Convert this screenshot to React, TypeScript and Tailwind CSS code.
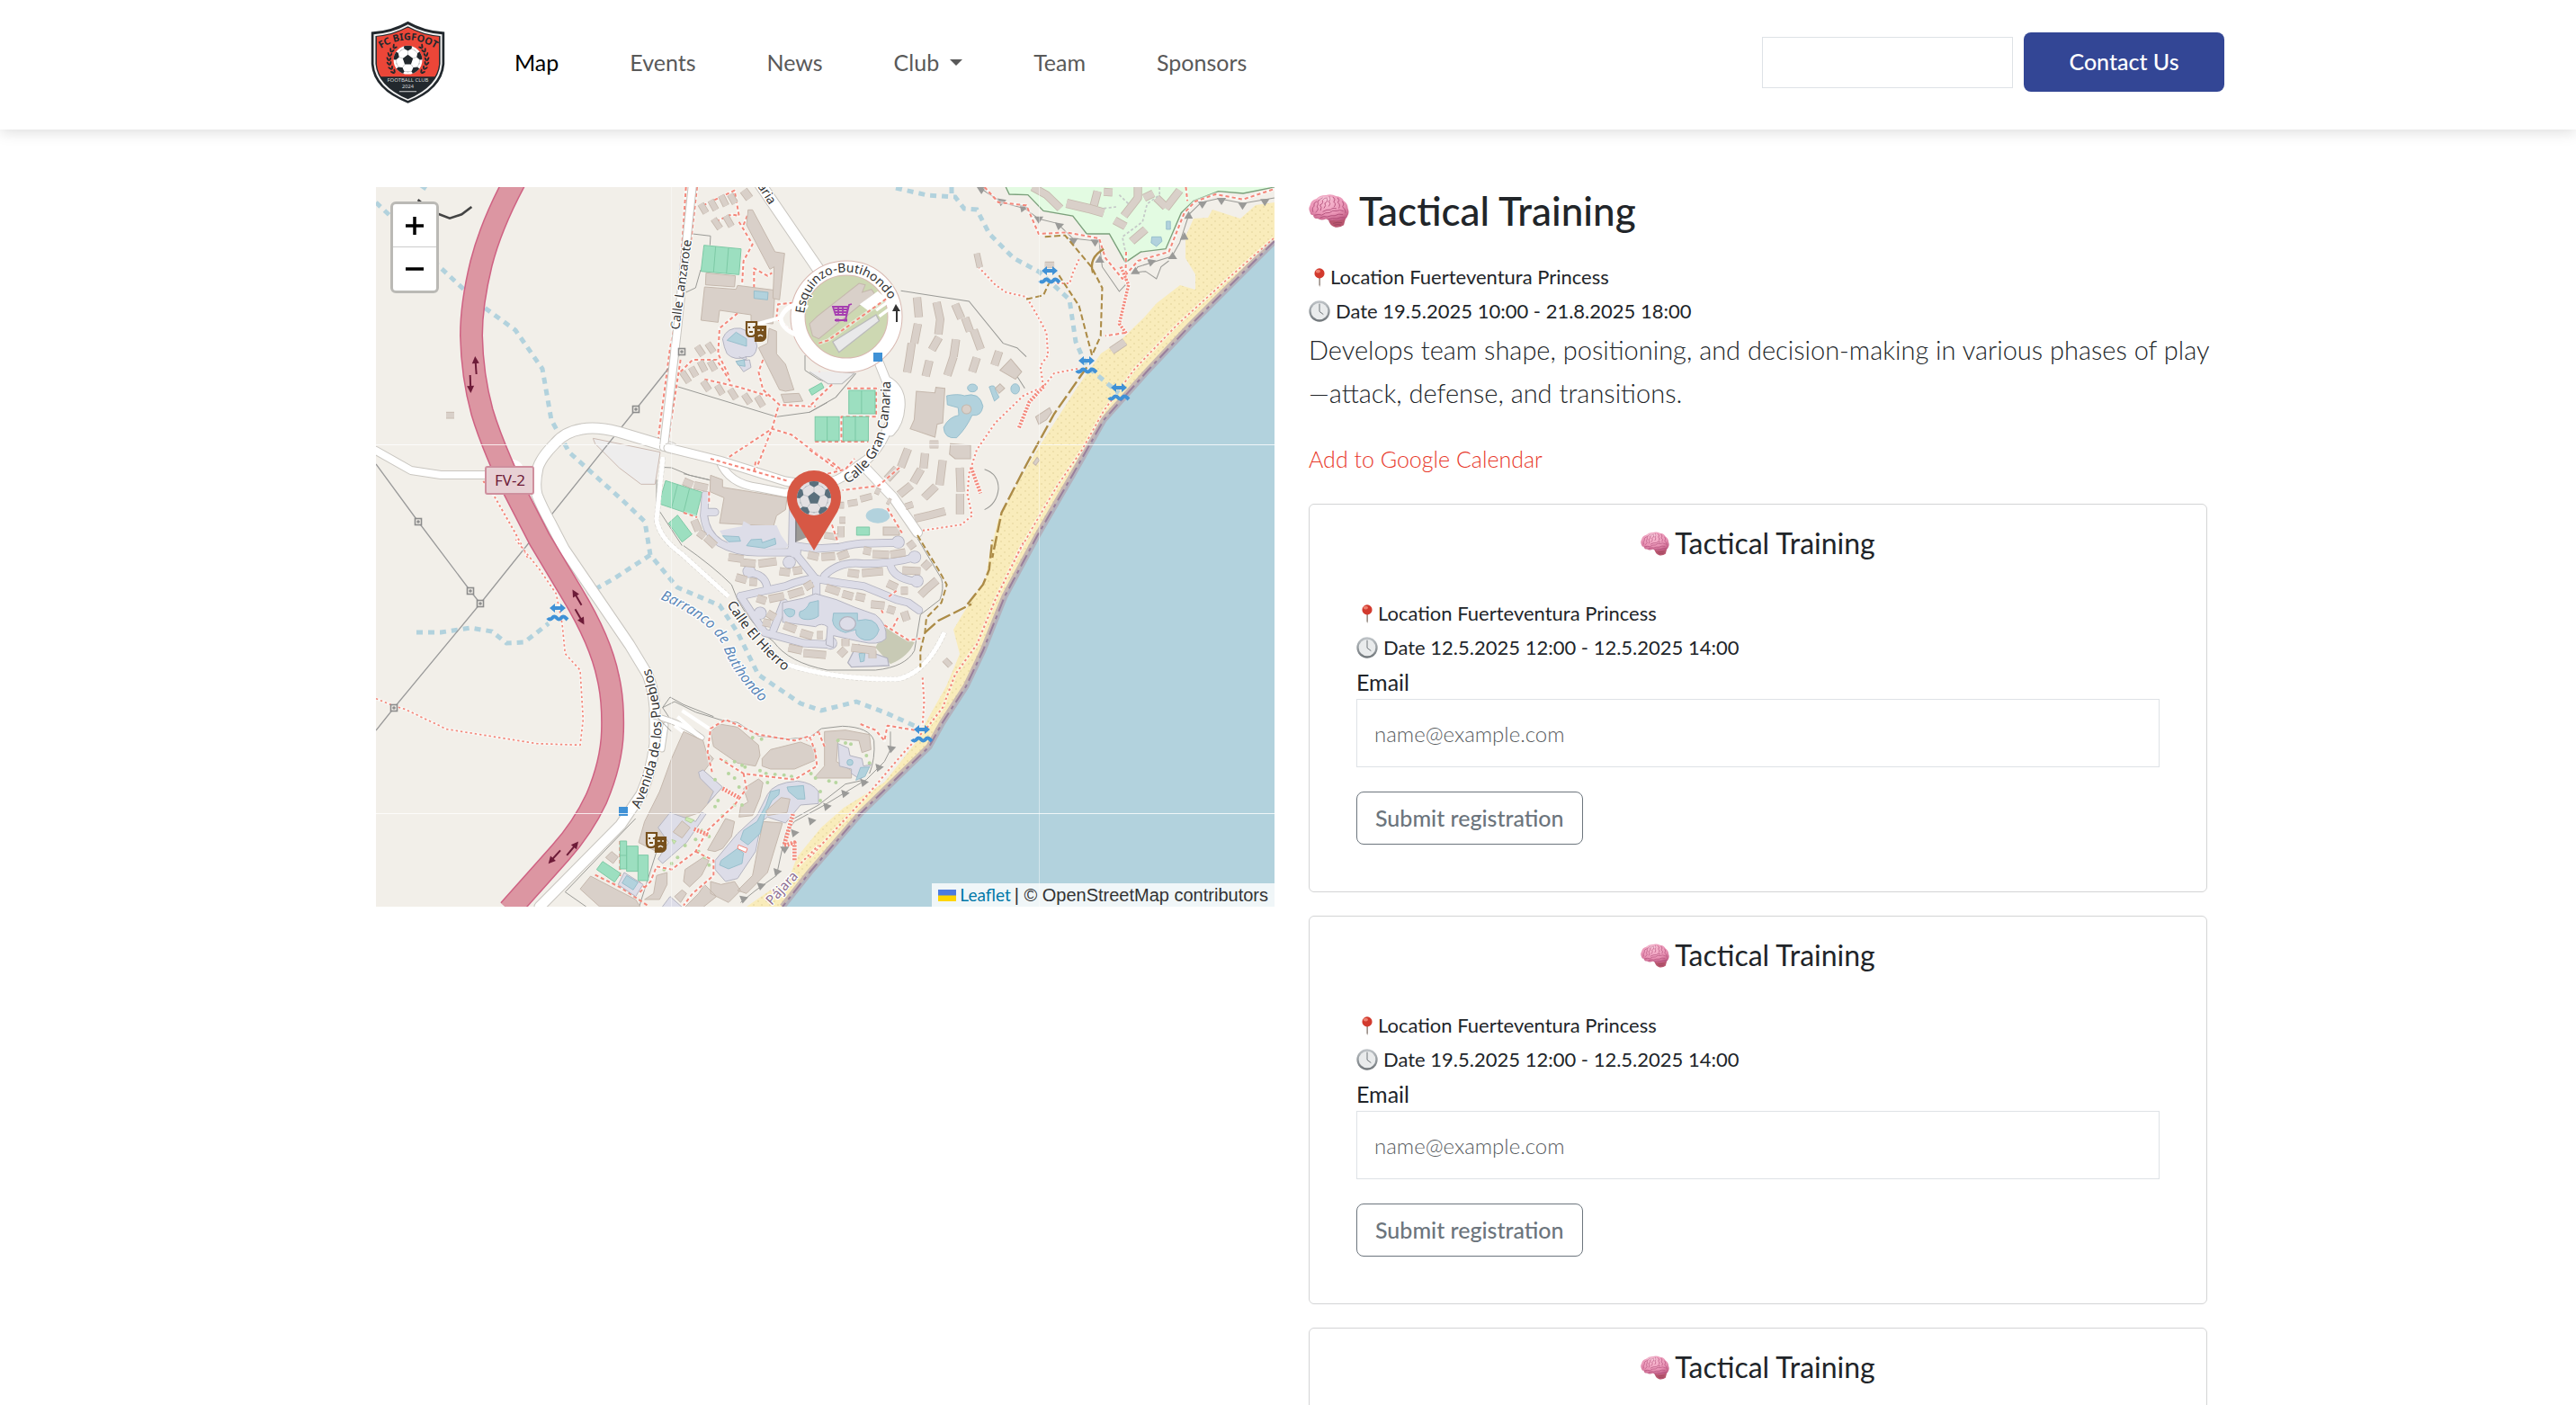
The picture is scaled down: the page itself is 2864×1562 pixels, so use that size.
import { useId } from "react";

const FONT = "font-['Lato','Open_Sans',sans-serif]";

/* ---------- small pictograms ---------- */

function Brain({ className }: { className: string }) {
  const id = useId();
  return (
    <svg viewBox="0 0 136 112" className={className} aria-hidden="true">
      <defs>
        <radialGradient id={id} cx="0.45" cy="0.3" r="0.75">
          <stop offset="0" stopColor="#f9bcd2" />
          <stop offset="0.6" stopColor="#e993b5" />
          <stop offset="1" stopColor="#bf5a82" />
        </radialGradient>
      </defs>
      <path d="M66 84 Q70 106 90 111 Q106 113 118 104 L124 82 L88 80 Z" fill="#b9566f" />
      <path
        d="M5 62 Q-3 48 5 36 Q8 20 26 15 Q38 2 58 3 Q76 -2 92 6 Q110 7 118 22 Q132 32 132 48 Q138 62 130 74 Q126 86 110 86 Q96 92 84 87 Q70 90 58 83 Q42 90 30 82 Q16 82 15 70 Q6 70 5 62 Z"
        fill={`url(#${id})`}
      />
      <g fill="none" stroke="#ac4a75" strokeWidth="2.8" strokeLinecap="round" opacity="0.9">
        <path d="M14 58 Q10 46 18 40 Q14 30 26 24" />
        <path d="M24 60 Q36 52 28 42 Q34 32 30 24 Q38 16 46 12" />
        <path d="M40 54 Q46 44 38 36 Q50 32 46 20 Q54 10 62 12" />
        <path d="M52 46 Q60 38 54 30 Q64 28 62 16 M70 8 Q76 18 68 24 Q76 32 68 40" />
        <path d="M20 70 Q34 66 44 70 Q56 60 70 62 Q80 52 94 56 Q104 50 116 56" />
        <path d="M40 78 Q52 72 62 76 Q76 70 88 72 Q100 64 114 68 M66 84 Q80 78 94 82 Q106 76 120 78" />
        <path d="M82 10 Q92 16 84 26 Q94 30 86 42 M98 12 Q106 20 98 28 Q108 34 102 46 M114 24 Q122 34 114 42 Q124 50 124 62" />
        <path d="M48 58 Q60 50 74 52 Q80 44 92 48" />
      </g>
      <path d="M82 98 Q96 92 112 96 M86 104 Q98 100 108 103" fill="none" stroke="#8d3d56" strokeWidth="2" />
      <ellipse cx="56" cy="14" rx="26" ry="7" fill="#fff" opacity="0.25" />
    </svg>
  );
}

function Pin() {
  return (
    <svg viewBox="0 0 72 64" className="h-[21px] w-[24px] shrink-0" aria-hidden="true">
      <path d="M34 26h5v30l-2.500 8l-2.500-8z" fill="#9c9089" />
      <circle cx="36" cy="18" r="17" fill="#d23a2e" />
      <ellipse cx="31" cy="11" rx="8" ry="6" fill="#f4917f" opacity="0.8" />
    </svg>
  );
}

function Clock() {
  const id = useId();
  return (
    <svg viewBox="0 0 72 72" className="h-[24px] w-[24px] shrink-0" aria-hidden="true">
      <defs>
        <linearGradient id={id} x1="0" y1="0" x2="0" y2="1">
          <stop offset="0" stopColor="#c0c5c9" />
          <stop offset="1" stopColor="#6f7579" />
        </linearGradient>
      </defs>
      <circle cx="36" cy="36" r="35" fill={`url(#${id})`} />
      <circle cx="36" cy="36" r="28" fill="#e9ebec" />
      <path d="M36 12V37L48 46" fill="none" stroke="#70767a" strokeWidth="3" strokeLinecap="round" />
    </svg>
  );
}

function Ball({ dark, light }: { dark: string; light: string }) {
  const id = useId();
  return (
    <g>
      <clipPath id={id}>
        <circle r="56" />
      </clipPath>
      <circle r="56" fill={light} />
      <g clipPath={`url(#${id})`}>
        <path d="M0-21L20-6L12 17H-12L-20-6Z" fill={dark} />
        {[0, 72, 144, 216, 288].map((a) => (
          <g key={a} transform={`rotate(${a})`}>
            <path d="M-18-60L-14-44L0-36L14-44L18-60Z" fill={dark} />
            <path d="M0-36V-20" stroke={dark} strokeWidth="2" opacity="0.35" />
            <path d="M14-44L30-36" stroke={dark} strokeWidth="2" opacity="0.35" />
            <path d="M-14-44L-30-36" stroke={dark} strokeWidth="2" opacity="0.35" />
          </g>
        ))}
      </g>
    </g>
  );
}

function Laurel() {
  return (
    <g fill="#22282d">
      {[
        [116, 110, 40], [106, 122, 25], [99, 136, 12], [96, 151, 0], [97, 166, -12], [102, 181, -25], [110, 194, -38],
      ].map(([x, y, r]) => (
        <g key={y} transform={`translate(${x} ${y}) rotate(${r})`}>
          <ellipse cx="-4" cy="0" rx="3" ry="8" transform="rotate(-30)" />
          <ellipse cx="5" cy="0" rx="3" ry="7" transform="rotate(25)" />
        </g>
      ))}
    </g>
  );
}

function ClubLogo() {
  return (
    <svg viewBox="36 24 248 278" className="h-[92px] w-[83px]" role="img" aria-label="FC Bigfoot">
      <defs>
        <path id="crest-arc" d="M66 120 Q160 58 256 120" />
        <clipPath id="crest-clip">
          <path d="M160 47 Q210 74 265 78 V168 Q258 240 160 284 Q62 240 55 168 V78 Q110 74 160 47Z" />
        </clipPath>
      </defs>
      <path d="M160 26 Q215 58 283 62 V170 Q276 256 160 301 Q44 256 37 170 V62 Q105 58 160 26Z" fill="#22282d" />
      <path d="M160 37 Q213 66 275 70 V169 Q268 250 160 293 Q52 250 45 169 V70 Q107 66 160 37Z" fill="#f3f3f3" />
      <path d="M160 43 Q211 71 269 75 V169 Q262 244 160 288 Q58 244 51 169 V75 Q109 71 160 43Z" fill="#22282d" />
      <g clipPath="url(#crest-clip)">
        <rect x="40" y="30" width="240" height="182" fill="#ec4638" />
      </g>
      <Laurel />
      <g transform="translate(320 0) scale(-1 1)">
        <Laurel />
      </g>
      <g transform="translate(160 156) scale(.86)">
        <Ball dark="#22282d" light="#fff" />
      </g>
      <text fontSize="33" fontWeight="700" fill="#22282d" textAnchor="middle" className="font-['Noto_Sans',sans-serif]">
        <textPath href="#crest-arc" startOffset="50%">FC BIGFOOT</textPath>
      </text>
      <text x="160" y="230" fontSize="18" fill="#d9dadb" textAnchor="middle" className="font-['Noto_Sans',sans-serif]">FOOTBALL CLUB</text>
      <text x="160" y="252" fontSize="17" fill="#d9dadb" textAnchor="middle" className="font-['Noto_Sans',sans-serif]">2024</text>
      <path d="M131 262H189" stroke="#d9dadb" strokeWidth="3" />
    </svg>
  );
}

/* ---------- map ---------- */

const NW = "translate(-18 -8) scale(.33333)";
const NE = "matrix(.3444 0 0 .33333 482 -8)";
const SW = "translate(-18 392) scale(.33333)";
const SE = "matrix(.3444 0 0 .33333 482 392)";
const RESORT = "translate(342 302) scale(.33333)";
const SOUTH = "translate(292 572) scale(.33333)";

const C = {
  land: "#f2efe9", sea: "#b2d2dd", sand: "#f9ecbb", building: "#d9d0c9", edge: "#c5b8ad",
  paved: "#dddde8", pavedEdge: "#b4b4c0", water: "#b2d2dd", waterEdge: "#8fb9c8", pitch: "#9cdfc0",
  pitchEdge: "#7cc9a5", foot: "#f4877a", track: "#ac8b46", ink: "#333", minor: "#9a9a96",
};

type Shape = { d: string };

function Strip({ d, w, fill = C.building, edge = C.edge, cap = "butt" }: Shape & { w: number; fill?: string; edge?: string; cap?: "butt" | "round" | "square" }) {
  return (
    <g fill="none" strokeLinejoin="round" strokeLinecap={cap}>
      <path d={d} stroke={edge} strokeWidth={w + 5} />
      <path d={d} stroke={fill} strokeWidth={w} />
    </g>
  );
}
const Building = ({ d }: Shape) => <path d={d} fill={C.building} stroke={C.edge} strokeWidth="3" />;
const Paved = ({ d }: Shape) => <path d={d} fill={C.paved} stroke={C.pavedEdge} strokeWidth="3" />;
const Pool = ({ d }: Shape) => <path d={d} fill={C.water} stroke={C.waterEdge} strokeWidth="2.5" />;
const Pitch = ({ d }: Shape) => <path d={d} fill={C.pitch} stroke={C.pitchEdge} strokeWidth="3" />;
const Foot = ({ d, w = 6, dash = "12 9" }: Shape & { w?: number; dash?: string }) => (
  <g fill="none" strokeLinejoin="round">
    <path d={d} stroke="#fff" strokeWidth={w + 5} opacity="0.5" />
    <path d={d} stroke={C.foot} strokeWidth={w} strokeDasharray={dash} />
  </g>
);
const Thin = ({ d }: Shape) => <path d={d} fill="none" stroke={C.minor} strokeWidth="3" />;
const Track = ({ d }: Shape) => <path d={d} fill="none" stroke={C.track} strokeWidth="6" strokeDasharray="20 10" />;
const Stream = ({ d }: Shape) => <path d={d} fill="none" stroke={C.sea} strokeWidth="5" strokeDasharray="7 6" />;
const Road = ({ d, w }: Shape & { w: number }) => (
  <g fill="none" strokeLinejoin="round" strokeLinecap="round">
    <path d={d} stroke="#c9c6c0" strokeWidth={w + 2} />
    <path d={d} stroke="#fff" strokeWidth={w} />
  </g>
);

function Teeth({ at }: { at: [number, number, number][] }) {
  return (
    <g fill="#9a9a98">
      {at.map(([x, y, r]) => (
        <path key={`${x}-${y}`} d="M-15-6H15L0 18Z" transform={`translate(${x} ${y}) rotate(${r})`} />
      ))}
    </g>
  );
}

function Shrubs({ at }: { at: [number, number][] }) {
  return (
    <g fill="#b7d6a0">
      {at.map(([x, y]) => (
        <circle key={`${x}-${y}`} cx={x} cy={y} r="6" />
      ))}
    </g>
  );
}

const COAST = "999,60 904,155 858,204 809,259 775,319 735,388 699,455 675,515 656,555 630,595 615,622 539,696 482,762 452,800";
const TRUNK =
  "M155 -8Q128 42 117 85Q106 130 106 165Q107 210 118 250Q127 280 146 322L182 392L218 452Q250 505 258 545Q264 570 263 605Q262 640 245 680Q230 712 205 740L148 804";

const FORDS: [number, number][] = [[749, 99], [790, 199], [826, 229], [202, 474], [607, 609]];
const PYLONS: [number, number][] = [[340, 183], [289, 247], [47, 372], [105, 449], [116, 463], [20, 579]];
const LABELS: { id: string; d: string; text: string; size: number; fill: string; italic?: boolean }[] = [
  { id: "l1", d: "M337 159L352 50", text: "Calle Lanzarote", size: 14, fill: C.ink },
  { id: "l2", d: "M424 -1L442 27L462 60", text: "aria", size: 14, fill: C.ink },
  { id: "l3", d: "M476 141Q480 106 509 96Q545 88 569 122L575 132", text: "Esquinzo-Butihondo", size: 14, fill: C.ink },
  { id: "l4", d: "M524 330Q556 310 566 275Q573 250 572 200", text: "Calle Gran Canaria", size: 15, fill: C.ink },
  { id: "l5", d: "M390 464Q420 513 464 546", text: "Calle El Hierro", size: 15, fill: C.ink },
  { id: "l6", d: "M316 458Q368 480 385 508Q397 548 444 586", text: "Barranco de Butihondo", size: 16, fill: "#5b87b8", italic: true },
  { id: "l7", d: "M293 692Q314 645 317 610Q319 575 301 520", text: "Avenida de los Pueblos", size: 15, fill: C.ink },
  { id: "l8", d: "M440 799L476 760", text: "Pájara", size: 15, fill: "#8c6d90" },
];

function Masks({ x, y }: { x: number; y: number }) {
  return (
    <g transform={`translate(${x} ${y})`} fill="none" stroke="#77501c" strokeWidth="2.2">
      <path d="M-10-10H1V2Q-1 6-4 6H-7Q-10 5-10 1Z" fill="#f2efe9" />
      <path d="M-7-5V-3M-2-5V-3M-7 1H-3" />
      <path d="M0-5H11V7Q10 11 5 11H0Z" fill="#77501c" />
      <path d="M2-1H5M7-1H9M3 6Q5 3 8 6" stroke="#f2efe9" strokeWidth="1.6" />
    </g>
  );
}

function AreaMap() {
  return (
    <svg viewBox="0 0 999 800" preserveAspectRatio="xMidYMid slice" className="block h-full w-full" role="img" aria-label="Map of Butihondo">
      <defs>
        <pattern id="sand" width="9" height="8" patternUnits="userSpaceOnUse">
          <rect width="9" height="8" fill={C.sand} />
          <circle cx="2" cy="2" r="0.7" fill="#dccb90" />
          <circle cx="6" cy="6" r="0.7" fill="#dccb90" />
        </pattern>
        {LABELS.map((l) => (
          <path key={l.id} id={l.id} d={l.d} />
        ))}
      </defs>
      <rect width="999" height="800" fill={C.land} />
      <polygon points={`${COAST} 999,800`} fill={C.sea} />
      <polygon
        points={`${COAST} 412,800 438,782 459,769 468,745 495,712 520,690 565,662 599,619 613,592 634,555 649,519 642,492 654,472 678,435 682,409 692,369 716,325 737,289 778,225 806,185 826,172 854,145 868,129 894,109 911,114 911,97 900,79 900,55 909,35 925,34 930,25 961,35 978,20 999,17`}
        fill="url(#sand)"
      />
      <polyline points={COAST} fill="none" stroke="#b3a3ae" strokeWidth="7" opacity="0.7" />
      <polyline points={COAST} fill="none" stroke="#8a6a92" strokeWidth="2" strokeDasharray="14 5 4 5" opacity="0.7" />

      {/* golf course and north-east cliffs */}
      <g transform={NE}>
        <path d="M632 20L645 48L705 50L755 103L850 120L895 180L968 180L1020 275L1070 240L1150 230L1200 110L1240 70L1320 38L1400 45L1501 24V20Z" fill="#e3fbe2" stroke="#7ba07b" strokeWidth="4" />
        <Strip w={22} d="M720 24L765 50L810 95M930 38L918 85M1060 24L1060 60L1015 120M1195 35L1150 95M985 135L1020 155M950 40L978 42M1080 60L1110 45M1120 60L1150 90" />
        <Strip w={26} d="M830 78L900 95L950 110" />
        <Strip w={22} d="M1040 205L1085 165" />
        <Pool d="M1105 190H1135L1138 205L1120 222L1103 210ZM1152 138H1165V165H1152Z" />
        <path d="M1130 24V50L1090 80L1075 140L1010 190L1020 240M1000 50L1030 80M950 95L990 90" fill="none" stroke="#c5c8c8" strokeWidth="5" strokeDasharray="9 7" />
        <Thin d="M555 30L620 75L695 95L740 130L800 145L850 195L935 205L945 290L1000 372L1020 350M1501 60L1400 78L1320 62L1265 75L1225 115L1195 210L1170 255L1060 290L1045 310L1085 305L1120 330L1135 290L1160 270" />
        <Teeth at={[[555, 30, 0], [620, 70, 10], [690, 92, 20], [740, 128, 0], [806, 150, 10], [852, 200, 0], [922, 205, 0], [937, 270, 180], [1268, 78, 0], [1330, 66, 0], [1398, 82, 0], [1470, 70, 0], [1222, 120, -60], [1208, 190, -60], [1172, 258, 180], [1103, 272, 10], [1052, 308, 180]]} />
        <Foot d="M565 24L610 75L700 85L740 180L830 175L935 195L955 260L1010 330L1060 270L1160 240L1210 110L1245 72L1310 48L1400 65L1501 30M1215 24L1220 70M1022 240L1020 340" />
        <Foot w={10} dash="6 5" d="M1005 290L1030 350L1000 480L1025 515" />
        <Foot d="M1020 510L955 520" />
        <Foot d="M545 290L600 350L635 375L700 390L740 460L765 510L770 585L745 620L755 690L690 720L600 810L540 900L515 980L510 1050L525 1120L490 1150L360 1170M865 630L790 645L755 690M870 265L850 310L840 345L790 345" dash="6 9" />
        <Foot w={12} dash="6 5" d="M755 690L710 740L675 830M522 960L552 1045" />
        <Foot w={5} dash="7 9" d="M1498 195L1350 330L1190 480L1050 630L950 770L880 900L800 1020L720 1160L665 1262" />
        <Track d="M760 190L825 185L910 290L945 360L940 520L912 585L870 420L800 310M700 398L755 385L775 340" />
        <path d="M950 230Q900 260 915 310" fill="none" stroke={C.track} strokeWidth="7" />
        <path d="M895 625L790 780L700 950L620 1110L590 1260" fill="none" stroke={C.track} strokeWidth="7" strokeDasharray="46 12" />
        <Thin d="M295 370L515 405L625 545L670 560L700 590M565 965Q610 980 610 1030Q605 1080 565 1100M670 655L695 695" />
        <Strip w={22} d="M347 392L353 458M410 408L422 465L416 515M418 525L395 567M470 415L490 462M502 460L518 505M530 500L553 565M350 480L338 545M330 545L322 600L315 642M473 532L465 590M465 590L445 652M612 572L597 618M540 593L525 640M387 603L375 655M318 897L295 958M282 962L250 998M373 912L368 962M360 965L335 1010M328 1018L290 1050M430 935L420 1018M408 1022L370 1060M485 960L488 1040M486 1047L486 1115M340 1130L390 1118L438 1105M388 882L416 882" />
        <Strip w={16} d="M540 245L550 292M760 283H790" />
        <Strip w={22} d="M975 570L1018 540" />
        <Building d="M345 705L405 710L408 692L437 695L430 810L412 815L405 858L325 830L338 800Z" />
        <Building d="M615 635L650 597L685 640L665 665ZM455 880L520 885L520 930L470 930L452 915ZM730 790L775 760L782 775L765 800L740 815ZM722 945L735 925L742 935L730 952Z" />
        <Pool d="M443 720Q480 712 500 720Q550 705 560 755Q555 790 525 785Q505 830 475 860Q435 865 433 825Q450 790 482 785L480 760L445 750ZM510 694a16 13 0 1 0 32 0a16 13 0 1 0-32 0M650 697a14 17 0 1 0 28 0a14 17 0 1 0-28 0M580 690Q600 680 600 700L612 725L597 738Z" />
        <Building d="M492 765a15 15 0 1 0 30 0a15 15 0 1 0-30 0M600 695L615 680L630 695L612 712Z" />
      </g>

      {/* streams */}
      <Stream d="M0 17L19 35L69 87L99 115L122 135L155 159L185 202L195 259L215 295L275 349L299 372L305 409L335 445L382 465L402 495L425 542L472 574L495 582L534 572L568 585L599 599" />
      <Stream d="M305 409L265 435L235 452" />
      <Stream d="M45 495L72 495L105 490L129 494L145 507L165 506L192 485" />
      <Stream d="M578 1L613 9L644 11L654 24L668 25L682 52L709 79L737 94L771 125L778 172L790 199L826 229M640 0V11M50 -2L56 2" />

      {/* west: hotel blocks and gardens */}
      <g transform={NW}>
        <path d="M778 862L1002 908L985 1015H938L865 960L785 880Z" fill="#eeeded" stroke="#cbbab2" strokeWidth="3" />
        <Thin d="M1110 180L1170 187L1168 218M1137 300L1120 360L1088 375M1055 688L1390 790L1500 775L1560 742M1002 958L1040 960L1100 985L1165 1000M1485 585V635L1530 665L1560 675M990 1000V1090L1075 1220" />
        <Foot d="M1088 24L1060 440L1035 560L995 865M1125 24L1105 200M1070 600L1025 890L1200 930L1440 1005" />
        <Foot d="M1145 85L1250 35L1265 120L1240 115L1185 140M1265 140L1310 215L1280 270L1275 350M1315 360V295L1360 320L1375 310M1445 410L1395 415L1390 460L1450 515M1260 445L1200 495L1195 580L1230 650M1070 640L1110 600L1190 600L1240 680M1150 665L1260 690L1360 720M1330 640L1345 700L1400 750L1490 755L1520 755M1345 600L1330 640M1395 760L1375 830L1320 970M1215 935L1375 830L1440 850L1560 940M1300 100L1280 150" />
        <Foot dash="7 9" d="M412 1005L440 1040L520 1180L560 1260" />
        <Building d="M1150 357L1255 365L1260 352L1385 368L1378 480L1305 475L1305 450L1200 435L1195 475L1138 468Z" />
        <Building d="M1155 310L1253 320L1250 357L1153 350Z" />
        <Building d="M1295 100L1310 100L1385 240L1417 245L1400 400L1378 395L1382 290L1368 298L1290 150Z" />
        <Building d="M1365 495L1390 505V580L1420 615L1448 700L1420 705L1400 700L1330 560L1360 545ZM1405 715L1465 712L1478 738L1415 743Z" />
        <Strip w={18} d="M1137 80L1155 110M1170 68L1188 100M1205 52L1222 86M1235 48L1252 78M1180 130L1202 162M1220 120L1240 155M1125 555L1145 585M1160 545L1180 575M1075 640L1098 675M1105 625L1122 655M1135 605L1152 638M1168 605L1185 635M1145 672L1165 702M1192 685L1210 715M1235 698L1255 730M1282 715L1302 745M1325 722L1345 755" />
        <Strip w={24} d="M1280 35L1300 62" />
        <path d="M1287 588Q1300 610 1265 590M1210 530Q1225 490 1270 495Q1320 510 1325 555Q1320 595 1290 590Q1250 605 1225 580Q1215 560 1210 530ZM1255 605L1300 600L1305 625L1280 640Z" fill={C.paved} stroke={C.pavedEdge} strokeWidth="3" />
        <Pool d="M1225 535L1255 508L1290 530V555ZM1315 370L1362 375L1360 400L1315 395ZM1255 605L1282 600L1285 622L1262 618Z" />
        <Strip w={18} d="M288 785L315 785" />
        <Pitch d="M1148 218L1272 230L1265 316L1138 305ZM1187 222L1180 308M1230 226L1223 312M1020 1003L1142 1042L1122 1122L998 1080ZM1060 1016L1040 1094M1100 1028L1080 1108M1060 1118L1108 1182L1075 1208L1030 1145ZM1498 700L1540 677L1548 693L1508 718Z" />
        <path d="M194 66L210 80L240 105L300 128L340 115L373 90" fill="none" stroke="#444" strokeWidth="8" />
      </g>
      <g transform={NE}>
        <Foot d="M122 695H215V790H103V870M18 873H190M30 640L75 680L0 755M0 900L90 965" />
        <Pitch d="M127 702H212V780H127ZM168 702V780M18 790H96V870H18ZM57 790V870M108 790H190V870H108ZM148 790V870" />
        <path d="M0 640L60 680L105 680L145 645L100 640" fill="#eeeded" stroke="#bbb" strokeWidth="3" />
        <Thin d="M0 775L85 725L150 645" />
      </g>

      {/* power line */}
      <path d="M340 183L289 247L116 463L20 579L0 604M0 308L47 372L105 449L116 463" fill="none" stroke="#9a9a9a" strokeWidth="1.3" />

      {/* roads */}
      <Road w={8} d="M0 293L39 315L72 320L140 320" />
      <circle cx="152" cy="315" r="12" fill="#fff" />
      <Road w={8} d="M382 304Q392 330 425 334L455 340L475 335" />
      <Road w={11} d="M329 290L269 272Q245 266 229 269Q210 272 199 285Q184 300 180 312Q176 330 179 342Q184 355 195 375L209 402L282 509L302 542Q309 560 310 579V619Q306 650 295 675L272 709L182 800" />
      <Road w={8} d="M352 -4L335 159L320 289" />
      <Road w={9} d="M325 290L382 304L455 327Q500 335 519 322L547 302Q564 285 568 269Q577 255 575 239Q572 225 566 212L558 192M568 215Q585 225 583 245Q582 262 572 272" />
      <Road w={10} d="M542 310L575 345L602 384" />
      <Road w={12} d="M424 -8L495 96" />
      <Road w={5} d="M309 588Q340 595 362 612M322 598L318 625" />
      <path d="M319 300L312 370Q315 390 340 408L392 455M455 530Q510 548 580 547Q612 540 632 495" fill="none" stroke="#d5d2cc" strokeWidth="6" strokeDasharray="3 2" />
      <path d="M319 300L312 370Q315 390 340 408L392 455M455 530Q510 548 580 547Q612 540 632 495" fill="none" stroke="#fff" strokeWidth="5" />
      <circle cx="523" cy="144" r="54" fill="#cdd8b2" stroke="#d8b8b0" strokeWidth="17" />
      <circle cx="523" cy="144" r="54" fill="none" stroke="#fff" strokeWidth="15" />
      <path d="M480 134Q460 125 450 145Q450 160 478 168" fill="none" stroke="#fff" strokeWidth="5" />
      <path d="M450 145L425 152" stroke="#fff" strokeWidth="4" />
      <g transform={NE}>
        <Building d="M0 480L25 455L160 345L180 350L170 375L200 365L210 380L160 420L30 530L10 520Z" />
        <path d="M75 540L215 450L225 470L95 575Z" fill="#e9e9ea" stroke="#bbb" strokeWidth="4" />
        <path d="M170 415L220 378L240 395L190 430ZM215 435L250 410M225 455L258 430" fill="#fff" stroke="#fff" strokeWidth="10" />
        <Foot d="M30 545L60 535L250 395" />
      </g>

      {/* resort village */}
      <g transform={RESORT}>
        <Thin d="M0 290Q100 360 160 420L180 470Q230 560 300 610Q350 680 480 705L640 705Q740 695 770 640L790 520L855 470Q870 430 860 400L780 265M0 50L90 72" />
        <path d="M675 560Q720 600 770 612Q750 660 690 685L640 630Z" fill="#c8cab5" />
        <Building d="M90 55L130 70V95L345 130L340 170L310 190L300 225L120 215L135 130L88 110Z" />
        <g fill="none" strokeLinecap="round" strokeLinejoin="round">
          {[[C.pavedEdge, 5], [C.paved, 0]].map(([color, extra]) => (
            <g key={String(color)} stroke={String(color)}>
              <g strokeWidth={22 + Number(extra)}>
                <path d="M73 120L68 190Q75 250 120 280Q180 315 260 312L370 312M365 140L362 300M70 178H105M360 300L440 400M370 290L440 300L520 295Q580 280 620 282L715 280M440 400Q400 400 340 425L190 458M440 400Q520 415 600 425L710 470L750 480L785 505M470 390Q520 340 600 350Q700 350 765 330M690 355Q700 400 780 410M443 400V460M278 425Q270 385 218 380" />
                <path d="M190 458L270 580L400 615L490 620M300 570L335 480" />
              </g>
              <g strokeWidth={38 + Number(extra)}>
                <path d="M715 278h1M770 328h1M778 408h1M218 376h1M352 345h1M255 515h1M490 615h1M370 310h1" />
              </g>
            </g>
          ))}
        </g>
        <path d="M120 240L195 225L200 208L225 222L310 222L325 255L350 290L340 298L200 305L150 285Z" fill={C.paved} />
        <path d="M330 480L400 465L440 450L510 470L570 495L640 520Q680 550 675 600Q650 625 590 610L500 590L500 630L475 620L480 560Q460 545 440 560L330 545Z" fill={C.paved} stroke={C.pavedEdge} strokeWidth="3" />
        <Pool d="M130 257L185 260L190 275L150 277ZM210 290L225 270L260 268L262 280L305 265L308 285L270 298ZM335 505Q350 495 370 505Q375 525 355 528Q340 525 335 505ZM420 480L450 473L450 525Q430 540 400 535Q380 530 388 510Q410 505 420 480ZM500 515L580 515L580 540Q640 525 652 570Q640 610 605 605Q570 595 575 570L540 580Q500 570 497 540Z" />
        <ellipse cx="547" cy="550" rx="27" ry="23" fill={C.paved} stroke={C.pavedEdge} strokeWidth="4" />
        <path d="M568 640L585 620L610 640L680 665L685 690L560 695L548 680Z" fill={C.paved} stroke={C.pavedEdge} strokeWidth="4" />
        <Pool d="M585 650L605 648L602 675L590 678Z" />
        <path d="M608 190a40 25 0 1 0 80 0a40 25 0 1 0-80 0" fill={C.water} />
        <Pitch d="M577 228H620V255H577Z" />
        <rect x="666" y="228" width="54" height="27" fill={C.building} stroke={C.edge} strokeWidth="3" />
        <Strip w={22} d="M0 75L30 88M35 88L80 98M150 328L200 335M190 345L240 350M250 350L310 342M35 205L50 240M50 245L70 260M75 262L105 290M320 375L355 380M365 375L395 370M175 395L210 405M220 410L245 412M245 465L275 475M285 468L335 458M350 455L400 440M405 430L430 415M475 430L520 445M530 450L565 460M575 458L605 465M625 485L670 490M680 500L705 508M415 320L450 328M460 328L505 325M515 328L550 315M600 305L625 310M630 318L685 320M690 320L740 312M750 295L770 280M548 380L585 385M595 382L665 375M730 372L790 375M800 365L820 345M680 415L712 430M725 440L748 440M790 455L810 435L845 405M735 510L745 540M280 515L305 530M265 545L290 550M335 555L375 570M390 580L430 592M445 588L465 588M350 630L395 640M400 648L475 655M540 600V625M520 655L540 635M560 630L640 640M630 640V665" />
        <Strip w={18} d="M520 155H535M548 150L580 145M590 135L628 125M520 205H540M470 255L515 262M525 225V262M640 105L655 112M680 140L690 145M740 160L765 152" />
        <Foot d="M0 180L45 195M85 110V150M680 165L730 250M495 220L515 280M720 30L650 90L530 105M670 555L750 605L790 600M700 560L715 530M685 460L710 440M660 505L665 515" />
        <Foot d="M90 0L230 40L350 75M240 10L235 45M460 55L540 35L570 0M480 0L530 40" />
        <Track d="M780 255L850 370L878 420L860 480L810 530L805 580L790 640V695" />
        <path d="M805 580L850 540L960 485" fill="none" stroke={C.track} strokeWidth="7" strokeDasharray="46 12" />
      </g>
      <g transform={SE}>
        <path d="M510 215L560 150L580 100L590 0" fill="none" stroke={C.track} strokeWidth="7" strokeDasharray="46 12" />
        <Foot dash="7 9" d="M365 460L370 540L365 620M690 10L600 200L540 350L470 450L430 560L385 620L300 715L180 860L0 1060" />
        <Strip w={16} d="M436 400L455 420" />
      </g>

      {/* south: hotel complex */}
      <g transform={SOUTH}>
        <Thin d="M80 20L120 0L190 35L270 60L330 70L400 115L500 125L570 118L610 90L680 82Q770 85 785 130Q790 190 770 240M840 100V160L820 200L760 260L620 345L520 400L490 440L460 580L390 630L340 670M750 262L690 275L600 345L500 400M110 100L60 50M60 500L0 690" />
        <path d="M130 50L215 125M145 30L235 90M120 80L160 110" stroke="#fff" strokeWidth="12" fill="none" />
        <Building d="M150 100L215 130L225 165L250 190L205 250L275 290L205 370L115 400L60 500L0 470L20 400L70 300L110 190Z" />
        <Building d="M240 100L270 75L330 85L400 145L405 180L390 215L330 205L250 150Z" />
        <Building d="M412 190L440 160L540 135L590 155L590 195L520 225L440 225L412 215Z" />
        <Building d="M620 100L690 95L770 110L775 160L745 170L735 130L665 125L660 200L710 230L710 255L585 255L620 215Z" />
        <Building d="M350 290L400 258L415 270L405 320L380 380L335 385L340 350L365 335ZM230 495L290 390L320 400L310 450L280 490L255 500ZM150 600L155 560L215 520L235 530L210 580L170 618ZM20 660L50 640L60 580L95 570L95 610L70 660Z" />
        <Building d="M415 400L480 405L430 570L360 640L330 630L380 580ZM120 650L145 628L160 640L140 670ZM240 600L275 610L320 600L340 630L300 670L240 640ZM150 690L200 640L220 610L260 650L210 690Z" />
        <Paved d="M200 235L215 228L280 285L230 340L250 300L205 255ZM65 420L105 370L190 400L210 370L225 375L160 470L80 540L65 525L100 470Z" />
        <Building d="M115 435L145 398L172 420L145 455Z" />
        <Paved d="M430 310Q450 270 530 265Q580 270 600 300V340L540 345L490 405L430 385L410 400L390 500L330 590L290 600L255 560V530L330 440L395 380Z" />
        <Paved d="M665 140L700 155L705 180L745 190L750 215L775 210L740 260L710 240V225L670 215ZM75 690L105 650L150 690Z" />
        <Pool d="M495 285L550 280L555 325L530 325L500 300ZM425 345L440 300L470 293L468 310L445 330L420 380L405 440L365 478L340 460L350 430L395 400ZM275 530L330 490L350 505L345 540L300 558L270 545ZM695 203a10 10 0 1 0 20 0a10 10 0 1 0-20 0M740 220L770 218L755 250L725 262Z" />
        <Building d="M425 365L475 320L505 325L495 370L460 375L430 380Z" />
        <Shrubs at={[[255, 260], [290, 200], [320, 200], [345, 212], [355, 218], [300, 240], [320, 255], [335, 285], [405, 230], [425, 240], [455, 243], [485, 245], [510, 250], [575, 240], [590, 255], [635, 265], [658, 270], [430, 270], [665, 130], [690, 138], [708, 142], [760, 180], [770, 205], [606, 300], [606, 330], [210, 430], [235, 450], [190, 460], [155, 480], [200, 500], [220, 520], [130, 520], [110, 540], [345, 345], [320, 345], [265, 330], [255, 350], [280, 380], [235, 545], [380, 120], [410, 125], [85, 560]]} />
        <path d="M160 385L185 395L175 405L155 395ZM110 460L125 465L118 475Z" fill="#cdebb0" stroke="#a5c58d" strokeWidth="2" />
        <Foot d="M245 235L230 170L240 90L290 60L400 110L520 130L570 115L590 170L595 215L520 260L430 250L350 240L270 190M350 240L360 290L320 345L230 430L190 500L110 560L60 550L40 600L0 640M190 500L250 530L250 580L180 640L150 680M600 100L620 150M740 75L790 95L820 130L830 80L920 95M0 600L20 620" />
        <Foot w={14} dash="6 5" d="M280 290L335 320M185 425L235 445M515 375L485 480L520 470V530" />
        <Foot w={6} dash="7 9" d="M530 550L600 480M600 100L560 130" />
        <Teeth at={[[843, 155, 10], [802, 218, 20], [752, 268, 20], [688, 305, 20], [628, 348, 20], [577, 396, 20], [520, 436, 20], [487, 490, 0], [462, 566, 20], [408, 612, 10], [350, 656, 10]]} />
        <path d="M333 478L363 490L358 503L330 490Z" fill="#fff" stroke={C.foot} strokeWidth="3" />
      </g>
      <g transform={SW}>
        <path d="M868 1005V1130M785 1118L870 1160L960 1220" fill="none" stroke={C.foot} strokeWidth="6" strokeDasharray="12 9" />
        <Building d="M735 1165L770 1122L920 1200L935 1224H800ZM820 1060L840 1040L862 1058L845 1080Z" />
        <Paved d="M882 1110L945 1150L920 1190L862 1150Z" />
        <Pool d="M890 1120L928 1143L912 1168L875 1145Z" />
        <Pitch d="M868 1005H890V1098H868ZM868 1053H890M890 1022H928V1106H890ZM928 1052H962V1137H928ZM810 1073L870 1113L850 1142L790 1100Z" />
        <Thin d="M920 930L685 1175L755 1224M1010 560L1035 525L1080 550L1180 590M1010 560L1030 590" />
        <Foot w={5} dash="7 9" d="M54 530L115 555L150 565L290 632L590 680L735 685L745 600L735 435L685 380L675 280L655 180L600 100L520 0" />
      </g>

      {/* trunk road */}
      <path d={TRUNK} fill="none" stroke="#cf6283" strokeWidth="26" />
      <path d={TRUNK} fill="none" stroke="#dc96a2" strokeWidth="23" />
      <g stroke="#6d1b38" fill="#6d1b38" strokeWidth="2">
        {[[111, 199, -4], [105, 218, 178], [224, 457, -30], [226, 477, 150], [199, 744, 222], [218, 736, 40]].map(([x, y, r]) => (
          <g key={`${x}-${y}`} transform={`translate(${x} ${y}) rotate(${r})`}>
            <path d="M0 9V-4" />
            <path d="M-4-3L0-11L4-3Z" stroke="none" />
          </g>
        ))}
      </g>
      <g stroke="#333" fill="#333" strokeWidth="2">
        <path d="M579 150V135" />
        <path d="M574 138L578 130L583 138Z" stroke="none" />
      </g>

      <g fill={C.land} stroke="#8c8c8c" strokeWidth="1.6">
        {PYLONS.map(([x, y]) => (
          <g key={`${x}-${y}`}>
            <rect x={x - 3.5} y={y - 3.5} width="7" height="7" />
            <circle cx={x} cy={y} r="1" />
          </g>
        ))}
      </g>
      <g fill="#3f91d6">
        <rect x="553" y="184" width="10" height="10" />
        <rect x="270" y="689" width="10" height="10" />
        {FORDS.map(([x, y]) => (
          <g key={`${x}-${y}`} transform={`translate(${x} ${y})`}>
            <path d="M-9-6L-3-11V-8H3V-11L9-6L3-1V-4H-3V-1Z" />
            <path d="M-11 5Q-9 8-6 5Q-4 2-1 5Q1 8 4 5Q6 2 9 5L11 7" fill="none" stroke="#3f91d6" strokeWidth="4" />
          </g>
        ))}
      </g>
      <g fill="none" stroke="#a63fb0" strokeWidth="1.8">
        <path d="M508 133H525L523 142H511ZM529 130L526 131L522 148H510M509 136H524M510 139H524M514 133V142M519 133V142" />
        <path d="M511 148h4M520 148h4" strokeWidth="3" />
      </g>
      <Masks x={422} y={160} />
      <Masks x={311} y={728} />

      <g className="font-['Noto_Sans',sans-serif]" stroke="#fff" strokeWidth="2.500" paintOrder="stroke" strokeLinejoin="round">
        {LABELS.map((l) => (
          <text key={l.id} fill={l.fill} fontSize={l.size} fontStyle={l.italic ? "italic" : "normal"}>
            <textPath href={`#${l.id}`}>{l.text}</textPath>
          </text>
        ))}
      </g>
      <rect x="122" y="311" width="53" height="30" rx="2" fill="#e8d0d4" stroke="#cf8f9e" strokeWidth="2" />
      <text x="149" y="332" fontSize="17" textAnchor="middle" fill="#6d1b38" className="font-['Noto_Sans',sans-serif]">FV-2</text>

      {/* tile seams */}
      <g stroke="#fff">
        <path d="M0 286.500H999M0 696.500H999" opacity="0.8" />
        <path d="M328.500 0V800M737.500 0V800" opacity="0.45" />
      </g>

      {/* event marker */}
      <path d="M466 352H500V380L466 395Z" fill="#333" opacity="0.45" />
      <path d="M487 404L461 361Q457 353 457 345A30 30 0 0 1 517 345Q517 353 513 361Z" fill="#d75845" />
      <g transform="translate(487 346) scale(.34)">
        <Ball dark="#5a6f7c" light="#e3e0e2" />
      </g>
    </svg>
  );
}

function MapPanel() {
  return (
    <section aria-label="Event location" className="relative h-[800px] overflow-hidden">
      <AreaMap />
      <div className="absolute top-4 left-4 flex w-[54px] flex-col rounded-md border-[3px] border-[#bab9b5] bg-white">
        <button type="button" aria-label="Zoom in" className="flex h-12 items-center justify-center border-b border-[#ccc]">
          <svg viewBox="0 0 20 20" className="size-5" aria-hidden="true"><path d="M10 0V20M0 10H20" stroke="#000" strokeWidth="3.500" /></svg>
        </button>
        <button type="button" aria-label="Zoom out" className="flex h-12 items-center justify-center">
          <svg viewBox="0 0 20 20" className="size-5" aria-hidden="true"><path d="M0 10H20" stroke="#000" strokeWidth="3.500" /></svg>
        </button>
      </div>
      <div className="absolute right-0 bottom-0 flex h-[26px] items-center gap-1 bg-white/80 px-[7px] font-['Liberation_Sans',Arial,sans-serif] text-[20px] leading-[26px] text-[#333]">
        <a href="#leaflet" className={`${FONT} flex items-center gap-1 text-[19px] text-[#0078a8]`}>
          <svg viewBox="0 0 20 13" className="h-[13px] w-5" aria-hidden="true">
            <path d="M0 0H20V7H0Z" fill="#4c7be1" />
            <path d="M0 6.500H20V13H0Z" fill="#ffd500" />
          </svg>
          Leaflet
        </a>
        <span>| © OpenStreetMap contributors</span>
      </div>
    </section>
  );
}

/* ---------- page ---------- */

const NAV = ["Map", "Events", "News", "Club", "Team", "Sponsors"];

function Header() {
  return (
    <header className="relative bg-white shadow-[0_2px_16px_rgba(0,0,0,0.15)]">
      <div className="mx-auto flex h-36 max-w-[2088px] items-center pr-[3px] pb-1.5 pl-6">
        <a href="#home" className="shrink-0"><ClubLogo /></a>
        <nav className="ml-[77px] flex items-center gap-[79px] text-[25px] leading-[38px]">
          {NAV.map((item) =>
            item === "Club" ? (
              <button key={item} type="button" className="flex items-center gap-3 text-[#595959]">
                Club
                <svg viewBox="0 0 14 7" className="h-[7px] w-3.5" aria-hidden="true"><path d="M0 0H14L7 7Z" fill="currentColor" /></svg>
              </button>
            ) : (
              <a key={item} href={`#${item.toLowerCase()}`} className={item === "Map" ? "text-black" : "text-[#595959]"}>{item}</a>
            ),
          )}
        </nav>
        <input type="text" aria-label="Search" className="ml-auto h-[57px] w-[279px] border border-[#dee2e6] bg-white px-4 text-2xl" />
        <a href="#contact" className="ml-3 flex h-[66px] w-[223px] items-center justify-center rounded-lg bg-[#334695] text-[25px] font-medium text-white">Contact Us</a>
      </div>
    </header>
  );
}

function Details({ date }: { date: string }) {
  return (
    <div className="text-[22px] leading-[38px]">
      <p className="flex items-center"><Pin />Location Fuerteventura Princess</p>
      <p className="flex items-center gap-1.5"><Clock />Date {date}</p>
    </div>
  );
}

function EventCard({ id, date }: { id: string; date: string }) {
  return (
    <article className="rounded-md border border-[#d3d4d5] px-[52px] pt-6 pb-[52px]">
      <h2 className="flex items-center justify-center gap-1.5 text-[32px] leading-[38px]">
        <Brain className="h-[27px] w-8" />
        Tactical Training
      </h2>
      <form className="mt-10" onSubmit={(e) => e.preventDefault()}>
        <Details date={date} />
        <label htmlFor={id} className="block text-[25px] leading-[38px]">Email</label>
        <input
          id={id}
          type="email"
          placeholder="name@example.com"
          className="block h-[76px] w-full border border-[#dee2e6] px-[19px] text-[24px] font-light placeholder:text-[#595c5f]"
        />
        <button type="submit" className="mt-[27px] h-[59px] rounded-lg border border-[#6c757d] px-5 text-[25px] font-medium text-[#6c757d]">
          Submit registration
        </button>
      </form>
    </article>
  );
}

const SESSIONS = [
  { id: "email-1", date: "12.5.2025 12:00 - 12.5.2025 14:00" },
  { id: "email-2", date: "19.5.2025 12:00 - 12.5.2025 14:00" },
  { id: "email-3", date: "26.5.2025 12:00 - 26.5.2025 14:00" },
];

export default function App() {
  return (
    <div className={`${FONT} h-screen overflow-hidden bg-white text-[#212529]`}>
      <Header />
      <main className="mx-auto grid max-w-[2064px] grid-cols-2 gap-[38px] pt-16 pr-2.5 pl-[18px]">
        <MapPanel />
        <section>
          <h1 className="flex items-center gap-[11px] text-[44px] leading-[52px] font-medium">
            <Brain className="h-[37px] w-[45px]" />
            Tactical Training
          </h1>
          <div className="mt-[29px]">
            <Details date="19.5.2025 10:00 - 21.8.2025 18:00" />
          </div>
          <p className="-mr-2 text-[29px] leading-[48px] font-light">
            Develops team shape, positioning, and decision-making in various phases of play—attack, defense, and transitions.
          </p>
          <a href="#calendar" className="mt-[25px] block text-[25px] leading-[48px] font-light text-[#e8392b]">Add to Google Calendar</a>
          <div className="mt-[26px] flex flex-col gap-[26px]">
            {SESSIONS.map((s) => (
              <EventCard key={s.id} {...s} />
            ))}
          </div>
        </section>
      </main>
    </div>
  );
}
